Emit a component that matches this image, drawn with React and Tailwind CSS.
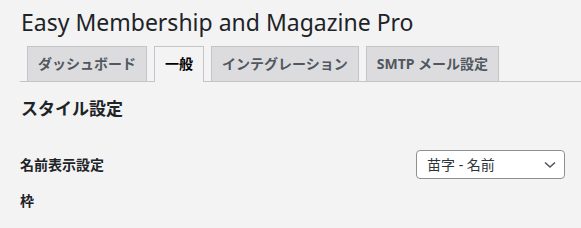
export default function App() {
  const jp = { fontFamily: '"Noto Sans", "Noto Sans CJK JP", sans-serif' };
  const tab =
    "border border-b-0 border-[#c3c4c7] px-[10px] py-[5px] text-[14px] leading-[24px] font-bold";
  return (
    <div className="w-[581px] h-[228px] bg-[#f3f3f3] overflow-hidden text-[#1d2327]" style={jp}>
      <div className="pl-[20px] pt-[7px]">
        <h1 className="text-[23px] leading-[30px] font-normal text-[#1d2327] pl-[1px]">
          Easy Membership and Magazine Pro
        </h1>
        <div className="mt-[9px] flex border-b border-[#c3c4c7] pl-[7px] gap-[7px] h-[36px]">
          <div className={tab + " bg-[#dcdcde] text-[#50575e]"}>ダッシュボード</div>
          <div className={tab + " bg-[#f3f3f3] text-black h-[36px] -mb-px"}>一般</div>
          <div className={tab + " bg-[#dcdcde] text-[#50575e]"}>インテグレーション</div>
          <div className={tab + " bg-[#dcdcde] text-[#50575e]"}>SMTP メール設定</div>
        </div>
        <h2 className="mt-[15px] pl-[1px] text-[17px] leading-[24px] font-bold text-[#1d2327]">スタイル設定</h2>
        <div className="mt-[29px] flex items-center justify-between pr-[16px]">
          <div className="text-[14px] leading-[20px] font-bold text-[#1d2327]">名前表示設定</div>
          <div className="w-[149px] h-[29px] border border-[#8c8f94] rounded-[4px] bg-white flex items-center justify-between pl-[10px] pr-[8px]">
            <span className="text-[14px] leading-[20px] text-[#2c3338]">苗字 - 名前</span>
            <svg width="12" height="8" viewBox="0 0 12 8">
              <path d="M1 1.5 L6 6 L11 1.5" fill="none" stroke="#50575e" strokeWidth="1.6" />
            </svg>
          </div>
        </div>
        <div className="mt-[12px] text-[14px] leading-[20px] font-bold text-[#1d2327]">枠</div>
      </div>
    </div>
  );
}
